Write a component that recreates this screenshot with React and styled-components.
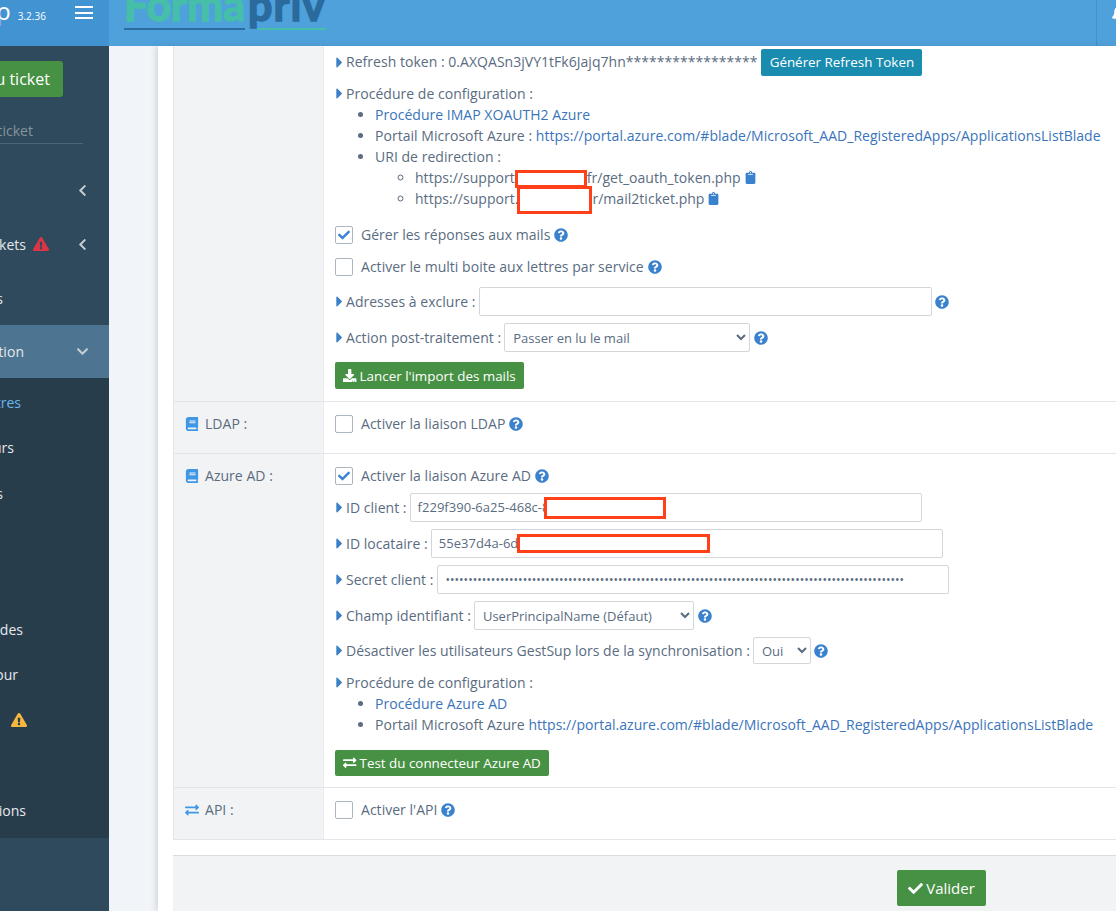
import React from 'react';
import styled, { createGlobalStyle } from 'styled-components';
import {
  FaBook, FaCaretRight, FaCheck, FaChevronDown, FaChevronLeft, FaClipboard,
  FaDownload, FaExchangeAlt, FaExclamationTriangle, FaQuestionCircle, FaBell,
} from 'react-icons/fa';

const Global = createGlobalStyle`
  html, body { margin: 0; padding: 0; overflow: hidden; }
  body { font-family: "Open Sans", "Liberation Sans", sans-serif; font-size: 14px; line-height: 21px; color: #5a6c7f; letter-spacing: .03px; }
  * { box-sizing: border-box; }
`;

const Page = styled.div`width: 1116px; height: 911px; overflow: hidden; display: flex; flex-direction: column; background: #f1f4f8;`;

/* Header */
const Header = styled.header`flex: 0 0 46px; display: flex; background: #4fa1db; overflow: hidden;`;
const Brand = styled.div`flex: 0 0 109px; background: #4293d1; overflow: hidden; display: flex; align-items: flex-start; color: #fff;`;
const BrandInner = styled.div`flex: 0 0 auto; margin: -4px 0 0 -83px; display: flex; align-items: baseline; white-space: nowrap;`;
const BrandName = styled.span`font-size: 24px; line-height: 30px;`;
const Version = styled.span`font-size: 10px; margin-left: 7px;`;
const Burger = styled.span`flex: none; width: 18px; height: 13px; margin: 6px 0 0 29px; display: flex; flex-direction: column; justify-content: space-between;`;
const BurgerBar = styled.i`display: block; height: 2px; background: #fff;`;
const Logo = styled.div`margin: -18px 0 0 15px; display: flex; align-self: flex-start; font-family: "Lato", sans-serif; font-weight: 700; font-size: 43px; line-height: 46px; height: 54px;`;
const LogoPart = styled.span`
  color: ${p => p.$color}; -webkit-text-stroke: 1.5px ${p => p.$color}; position: relative; letter-spacing: ${p => p.$spacing}px;
  margin-left: ${p => p.$ml || 0}px; height: 49px;
  &::after { content: ""; position: absolute; left: ${p => p.$barL}px; right: 0; top: 46px; height: 2px; background: ${p => p.$bar}; }
`;
const HeaderEnd = styled.div`margin-left: auto; flex: 0 0 20px; border-left: 1px solid #4590c8; color: #fff; font-size: 18px; padding-left: 14px; overflow: hidden;`;
const Bell = styled.span`display: block; margin-top: 4px;`;

const Body = styled.div`flex: 1; display: flex; min-height: 0;`;

/* Sidebar */
const Sidebar = styled.aside`flex: 0 0 109px; overflow: hidden; background: #2e4a5c; color: #e8edf0;`;
const SidebarInner = styled.div`width: 250px; margin-left: -141px; display: flex; flex-direction: column;`;
const NewTicket = styled.button`
  align-self: flex-start; margin: 15px 0 0 66px; width: 138px; height: 36px; background: #479144; color: #fff; border: 0; border-radius: 3px;
  font: 400 16px "Open Sans", sans-serif; text-align: center; padding: 0; white-space: nowrap;
`;
const Search = styled.div`
  margin: 20px 26px 0 0; height: 27px; border-bottom: 1px solid #4f6573; color: #87939c; font-size: 14px; line-height: 21px; white-space: nowrap; text-align: right; padding: 3px 50px 0 0;
`;
const NavItem = styled.div`
  height: ${p => p.$h}px; display: flex; align-items: center; padding-right: 20px; font-size: 14px;
  background: ${p => p.$active ? '#4d7491' : 'transparent'};
  color: ${p => p.$current ? '#6cb6ef' : '#e4e9ec'};
`;
const NavLabel = styled.span`flex: 0 0 ${p => p.$end + 141}px; text-align: right; white-space: nowrap;`;
const NavAlert = styled.span`display: flex; margin-left: ${p => p.$ml}px; font-size: 16px; color: ${p => p.$color};`;
const NavChevron = styled.span`display: flex; margin-left: auto; font-size: 13px; color: #c6ced4;`;
const NavList = styled.nav`margin-top: 19px;`;
const SubNav = styled.div`background: #273d4c; padding: 2px 0 5px;`;

/* Main */
const Main = styled.main`flex: 1; min-width: 0; padding-left: 49px;`;
const Card = styled.div`height: 100%; background: #fff; padding-left: 15px; box-shadow: -2px 0 6px rgba(60, 70, 85, .18); display: flex; flex-direction: column;`;
const Row = styled.section`display: grid; grid-template-columns: 150px 1fr; border-bottom: 1px solid #e3e5e8; border-left: 1px solid #e3e5e8;`;
const Head = styled.div`background: #f2f3f5; border-right: 1px solid #e9ebee; padding: ${p => p.$pt}px 0 0 11px; display: flex; align-items: flex-start; color: #5a6c7f;`;
const HeadIcon = styled.span`display: flex; width: 20px; height: 21px; align-items: center; color: #3f97e6; font-size: 14px;`;
const Cell = styled.div`padding: ${p => p.$pt}px 0 ${p => p.$pb}px 11px; min-width: 0; white-space: nowrap;`;
const Line = styled.div`display: flex; align-items: center; margin-top: ${p => p.$mt || 0}px; position: relative; height: ${p => p.$h || 21}px;`;
const Caret = styled.span`
  display: flex; justify-content: center; width: 10px; color: #3b7fc6; font-size: 17px; flex: none; margin-left: -1px; margin-right: 2px;
  svg { flex: none; }
`;
const RaisedText = styled.span`margin-top: -2px;`;
const Help = styled(FaQuestionCircle)`color: #3b82ce; font-size: 14px; margin-left: ${p => p.$ml || 0}px; flex: none;`;
const Box = styled.span`
  flex: none; width: 18px; height: 18px; border: 1px solid #adb5bd; border-radius: 2px; background: #fff; display: flex; align-items: center; justify-content: center;
  color: #3b82d6; font-size: 12px; margin-right: 8px;
`;
const Input = styled.div`
  flex: none; width: ${p => p.$w}px; height: 29px; margin-left: ${p => p.$ml || 0}px; border: 1px solid #d3d6da; border-radius: 2px; background: #fff; padding: 0 7px; font-size: 13px; line-height: 27px; color: #5a6c7f;
  overflow: hidden;
`;
const Dots = styled.span`font-size: 12px;`;
const Select = styled.select`
  flex: none; width: ${p => p.$w}px; height: ${p => p.$h || 29}px; margin-left: ${p => p.$ml || 0}px; border: 1px solid #d3d6da; border-radius: 2px; background: #fff; padding: 0 4px; color: #5a6c7f;
  font: 400 13px "Open Sans", sans-serif;
`;
const Action = styled.button`
  flex: none; height: ${p => p.$h || 27}px; width: ${p => p.$w}px; margin-left: ${p => p.$ml || 0}px; background: ${p => p.$bg || '#479144'}; color: #fff; border: 0; border-radius: 2px; font: 400 13.4px "Open Sans", sans-serif;
  display: inline-flex; align-items: center; justify-content: center; gap: 3px; padding: 0 0 ${p => p.$pb || 0}px;
`;
const Link = styled.a`color: #3a74ba; text-decoration: none;`;
const List = styled.ul`margin: 0; padding: 0 0 0 40px; list-style: disc; line-height: 21px;`;
const SubList = styled.ul`margin: 0; padding: 0 0 0 40px; list-style: circle;`;
const Clip = styled(FaClipboard)`color: #3b82ce; font-size: 13px; margin-left: 3px; vertical-align: -1px;`;
const InlineMask = styled.span`
  display: inline-block; width: ${p => p.$w}px; height: ${p => p.$h}px; margin: ${p => p.$mt}px 0 -8px ${p => p.$ml || 0}px; border: 3px solid #ff4019; background: #fff; vertical-align: middle;
`;
const OverMask = styled.span`position: absolute; left: ${p => p.$l}px; top: ${p => p.$t}px; width: ${p => p.$w}px; height: ${p => p.$h}px; border: 3px solid #ff4019; background: #fff;`;

const Spacer = styled.div`height: 15px; flex: none;`;
const Footer = styled.footer`flex: 1; background: #f1f3f5; border-top: 1px solid #d9dbde; padding: 14px 0 0 724px;`;
const Submit = styled.button`
  width: 89px; height: 36px; background: #479144; color: #fff; border: 0; border-radius: 2px; font: 400 15px "Open Sans", sans-serif;
  display: inline-flex; align-items: center; justify-content: center; gap: 3px; padding: 0;
`;

const Caretted = ({ children }) => <><Caret><FaCaretRight /></Caret>{children}</>;

export default function App() {
  return (
    <Page>
      <Global />
      <Header>
        <Brand>
          <BrandInner>
            <BrandName>GestSup</BrandName>
            <Version>3.2.36</Version>
          </BrandInner>
          <Burger><BurgerBar /><BurgerBar /><BurgerBar /></Burger>
        </Brand>
        <Logo>
          <LogoPart $color="#45bfa8" $bar="#2d6c9f" $barL={0} $spacing={0}>Forma</LogoPart>
          <LogoPart $color="#2a6a9c" $bar="#45bfa8" $barL={10} $spacing={1} $ml={3}>priv</LogoPart>
        </Logo>
        <HeaderEnd><Bell><FaBell /></Bell></HeaderEnd>
      </Header>
      <Body>
        <Sidebar>
          <SidebarInner>
            <NewTicket>Nouveau ticket</NewTicket>
            <Search>Rechercher un ticket</Search>
            <NavList>
              <NavItem $h={54}><NavLabel $end={-8}>Mes tickets</NavLabel><NavChevron><FaChevronLeft /></NavChevron></NavItem>
              <NavItem $h={54}><NavLabel $end={26}>Tous les tickets</NavLabel><NavAlert $ml={7} $color="#dc3545"><FaExclamationTriangle /></NavAlert><NavChevron><FaChevronLeft /></NavChevron></NavItem>
              <NavItem $h={54}><NavLabel $end={3}>Statistiques</NavLabel></NavItem>
              <NavItem $h={53} $active><NavLabel $end={24}>Administration</NavLabel><NavChevron><FaChevronDown /></NavChevron></NavItem>
            </NavList>
            <SubNav>
              <NavItem $h={45.3} $current><NavLabel $end={21}>Paramètres</NavLabel></NavItem>
              <NavItem $h={45.3}><NavLabel $end={14}>Utilisateurs</NavLabel></NavItem>
              <NavItem $h={45.3}><NavLabel $end={3}>Listes</NavLabel></NavItem>
              <NavItem $h={45.3}><NavLabel $end={-10}>Groupes</NavLabel></NavItem>
              <NavItem $h={45.3}><NavLabel $end={-10}>Logs</NavLabel></NavItem>
              <NavItem $h={45.3}><NavLabel $end={23}>Sauvegardes</NavLabel></NavItem>
              <NavItem $h={45.3}><NavLabel $end={18}>Mise à jour</NavLabel></NavItem>
              <NavItem $h={45.3}><NavLabel $end={-3}>Système</NavLabel><NavAlert $ml={14} $color="#f8b73f"><FaExclamationTriangle /></NavAlert></NavItem>
              <NavItem $h={45.3}><NavLabel $end={-10}>Licence</NavLabel></NavItem>
              <NavItem $h={45.3}><NavLabel $end={26}>Informations</NavLabel></NavItem>
            </SubNav>
          </SidebarInner>
        </Sidebar>
        <Main>
          <Card>
            <Row>
              <Head $pt={12} />
              <Cell $pt={3} $pb={12}>
                <Line $h={27}>
                  <Caretted><RaisedText>Refresh token : 0.AXQASn3jVY1tFk6Jajq7hn*****************</RaisedText></Caretted>
                  <Action $bg="#1a8caf" $w={161} $ml={4} $pb={2}>Générer Refresh Token</Action>
                </Line>
                <Line $mt={7}><Caretted>Procédure de configuration :</Caretted></Line>
                <List>
                  <li><Link>Procédure IMAP XOAUTH2 Azure</Link></li>
                  <li>Portail Microsoft Azure : <Link>https://portal.azure.com/#blade/Microsoft_AAD_RegisteredApps/ApplicationsListBlade</Link></li>
                  <li>URI de redirection :
                    <SubList>
                      <li>https://support<InlineMask $w={72} $h={18} $mt={-8} />fr/get_oauth_token.php<Clip /></li>
                      <li>https://support.<InlineMask $w={75} $h={28} $mt={-8} $ml={-1} />r/mail2ticket.php<Clip /></li>
                    </SubList>
                  </li>
                </List>
                <Line $mt={15}><Box><FaCheck /></Box>Gérer les réponses aux mails<Help $ml={4} /></Line>
                <Line $mt={11}><Box />Activer le multi boite aux lettres par service<Help $ml={4} /></Line>
                <Line $mt={10} $h={29}><Caretted>Adresses à exclure :</Caretted><Input $w={453} $ml={4} /><Help $ml={3} /></Line>
                <Line $mt={7} $h={29}><Caretted>Action post-traitement :</Caretted><Select $w={246} $ml={3}><option>Passer en lu le mail</option></Select><Help $ml={4} /></Line>
                <Line $mt={10} $h={27}><Action $w={189}><FaDownload />Lancer l'import des mails</Action></Line>
              </Cell>
            </Row>
            <Row>
              <Head $pt={11}><HeadIcon><FaBook /></HeadIcon>LDAP :</Head>
              <Cell $pt={11} $pb={19}>
                <Line><Box />Activer la liaison LDAP<Help $ml={4} /></Line>
              </Cell>
            </Row>
            <Row>
              <Head $pt={11}><HeadIcon><FaBook /></HeadIcon>Azure AD :</Head>
              <Cell $pt={11} $pb={11}>
                <Line><Box><FaCheck /></Box>Activer la liaison Azure AD<Help $ml={4} /></Line>
                <Line $mt={7} $h={29}><Caretted>ID client :</Caretted><Input $w={512} $ml={3}>f229f390-6a25-468c-8</Input><OverMask $l={209} $t={4} $w={122} $h={22} /></Line>
                <Line $mt={7} $h={29}><Caretted>ID locataire :</Caretted><Input $w={512} $ml={3}>55e37d4a-6d</Input><OverMask $l={182} $t={5} $w={193} $h={19} /></Line>
                <Line $mt={7} $h={29}><Caretted>Secret client :</Caretted><Input $w={512} $ml={4}><Dots>{'•'.repeat(101)}</Dots></Input></Line>
                <Line $mt={7} $h={29}><Caretted>Champ identifiant :</Caretted><Select $w={220} $ml={3}><option>UserPrincipalName (Défaut)</option></Select><Help $ml={4} /></Line>
                <Line $mt={7} $h={27}><Caretted>Désactiver les utilisateurs GestSup lors de la synchronisation :</Caretted><Select $w={58} $h={27} $ml={3}><option>Oui</option></Select><Help $ml={3} /></Line>
                <Line $mt={8}><Caretted>Procédure de configuration :</Caretted></Line>
                <List>
                  <li><Link>Procédure Azure AD</Link></li>
                  <li>Portail Microsoft Azure <Link>https://portal.azure.com/#blade/Microsoft_AAD_RegisteredApps/ApplicationsListBlade</Link></li>
                </List>
                <Line $mt={15} $h={26}><Action $w={214} $h={26} $pb={1}><FaExchangeAlt />Test du connecteur Azure AD</Action></Line>
              </Cell>
            </Row>
            <Row>
              <Head $pt={11}><HeadIcon><FaExchangeAlt /></HeadIcon>API :</Head>
              <Cell $pt={11} $pb={19}>
                <Line><Box />Activer l'API<Help $ml={4} /></Line>
              </Cell>
            </Row>
            <Spacer />
            <Footer><Submit><FaCheck />Valider</Submit></Footer>
          </Card>
        </Main>
      </Body>
    </Page>
  );
}
